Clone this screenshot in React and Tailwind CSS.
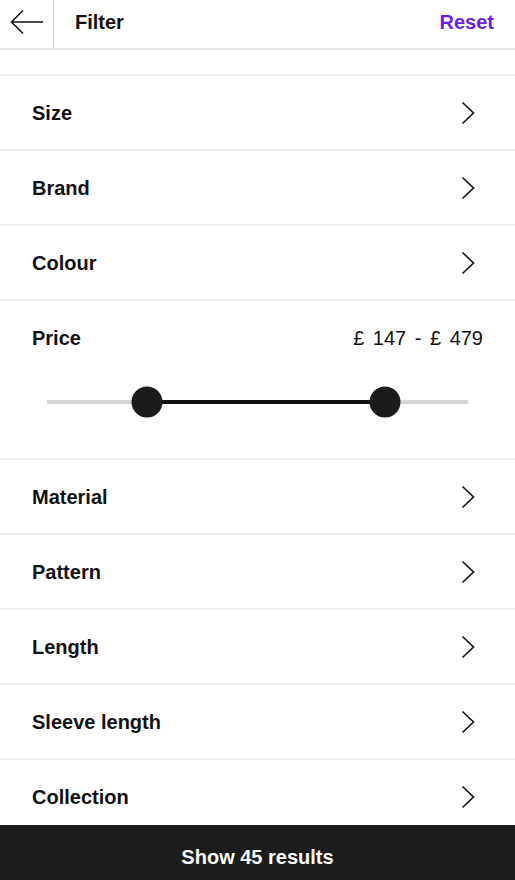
import { useState } from 'react'

const before = ['Size', 'Brand', 'Colour']
const after = ['Material', 'Pattern', 'Length', 'Sleeve length', 'Collection']

function Chevron() {
  return (
    <svg width="14" height="24" viewBox="0 0 14 24" fill="none">
      <path d="M1.5 1.5 L12.5 12 L1.5 22.5" stroke="#111" strokeWidth="1.6" />
    </svg>
  )
}

function Row({ label }) {
  return (
    <div className="flex h-[75px] shrink-0 items-center justify-between border-b-2 border-[#ececec] pl-8 pr-[40px]">
      <span className="text-[20px] font-bold text-[#111]">{label}</span>
      <Chevron />
    </div>
  )
}

export default function App() {
  const [range] = useState({ min: 23.75, max: 80.3 })

  return (
    <div
      className="flex h-screen flex-col overflow-hidden bg-white text-[#111]"
      style={{ fontFamily: '"Liberation Sans", Arial, sans-serif' }}
    >
      <header className="flex h-[50px] shrink-0 items-center border-b-2 border-[#e6e6e6]">
        <div className="flex h-full w-[54px] items-center justify-center border-r border-[#cfcfcf]">
          <svg className="mb-[5px]" width="34" height="26" viewBox="0 0 34 26" fill="none">
            <path d="M33 13 H2 M13 1.5 L1.5 13 L13 24.5" stroke="#111" strokeWidth="1.5" />
          </svg>
        </div>
        <span className="mb-[5px] ml-[21px] text-[20px] font-bold">Filter</span>
        <button className="mb-[5px] ml-auto mr-[21px] text-[20px] font-bold text-[#6a1fe3]">Reset</button>
      </header>

      <div className="flex flex-1 flex-col overflow-hidden">
        <div className="h-[26px] shrink-0 border-b-2 border-[#ececec]" />
        {before.map(l => <Row key={l} label={l} />)}

        <div className="shrink-0 border-b-2 border-[#ececec] px-8 pt-[22px] pb-[54px]">
          <div className="flex items-center justify-between">
            <span className="text-[20px] font-bold">Price</span>
            <span className="text-[20px] [word-spacing:3px]">£ 147 - £ 479</span>
          </div>
          <div className="mt-[47px] px-[15px]">
            <div className="relative h-[4px] bg-[#d4d4d4]">
              <div
                className="absolute top-0 h-[4px] bg-[#111]"
                style={{ left: `${range.min}%`, width: `${range.max - range.min}%` }}
              />
              <div
                className="absolute top-1/2 h-[31px] w-[31px] -translate-x-1/2 -translate-y-1/2 rounded-full bg-[#1b1b1b]"
                style={{ left: `${range.min}%` }}
              />
              <div
                className="absolute top-1/2 h-[31px] w-[31px] -translate-x-1/2 -translate-y-1/2 rounded-full bg-[#1b1b1b]"
                style={{ left: `${range.max}%` }}
              />
            </div>
          </div>
        </div>

        {after.map(l => <Row key={l} label={l} />)}
      </div>

      <button className="flex h-[55px] shrink-0 items-center justify-center bg-[#1c1c1c] pt-[9px] text-[20px] font-bold text-white">
        Show 45 results
      </button>
    </div>
  )
}
